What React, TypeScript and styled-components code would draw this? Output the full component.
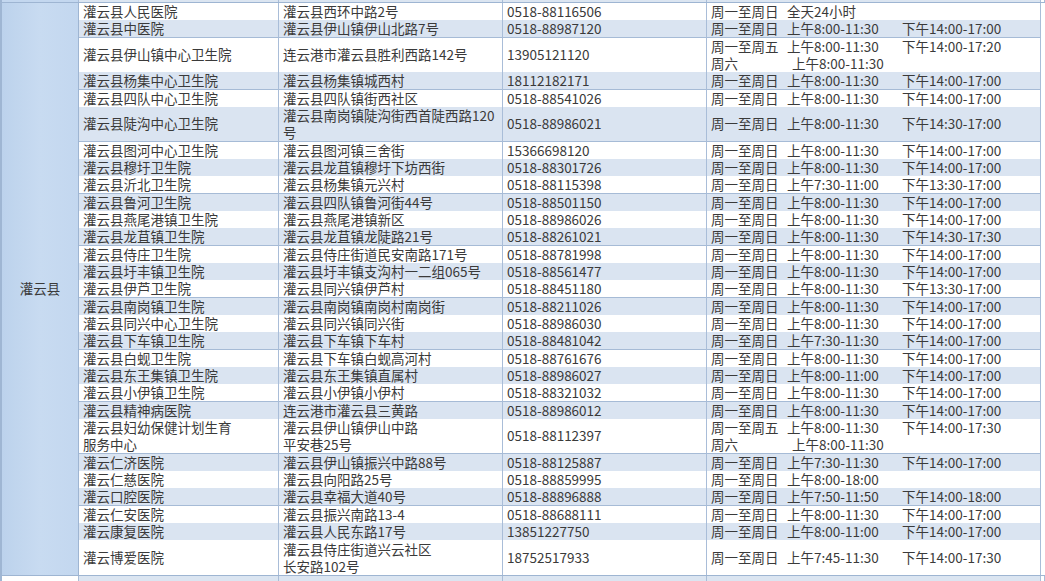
import React from "react";
import styled, { createGlobalStyle } from "styled-components";

const Global = createGlobalStyle`
  html, body { margin: 0; padding: 0; background: #ffffff; }
  body { width: 1045px; height: 581px; overflow: hidden; }
`;

const UNIT = 17.33;
const COLS = "200px 224px 204px 334px";

type Hours =
  | { kind: "allday" }
  | { kind: "day"; am: string; pm?: string }
  | { kind: "weekday"; am: string; pm: string; sat: string };

type Entry = {
  name: string[];
  addr: string[];
  phone: string;
  hours: Hours;
  units?: number;
};

const d = (am: string, pm?: string): Hours => ({ kind: "day", am, pm });

const rows: Entry[] = [
  { name: ["灌云县人民医院"], addr: ["灌云县西环中路2号"], phone: "0518-88116506", hours: { kind: "allday" } },
  { name: ["灌云县中医院"], addr: ["灌云县伊山镇伊山北路7号"], phone: "0518-88987120", hours: d("8:00-11:30", "14:00-17:00") },
  { name: ["灌云县伊山镇中心卫生院"], addr: ["连云港市灌云县胜利西路142号"], phone: "13905121120", hours: { kind: "weekday", am: "8:00-11:30", pm: "14:00-17:20", sat: "8:00-11:30" }, units: 2 },
  { name: ["灌云县杨集中心卫生院"], addr: ["灌云县杨集镇城西村"], phone: "18112182171", hours: d("8:00-11:30", "14:00-17:00") },
  { name: ["灌云县四队中心卫生院"], addr: ["灌云县四队镇街西社区"], phone: "0518-88541026", hours: d("8:00-11:30", "14:00-17:00") },
  { name: ["灌云县陡沟中心卫生院"], addr: ["灌云县南岗镇陡沟街西首陡西路120", "号"], phone: "0518-88986021", hours: d("8:00-11:30", "14:30-17:00"), units: 2 },
  { name: ["灌云县图河中心卫生院"], addr: ["灌云县图河镇三舍街"], phone: "15366698120", hours: d("8:00-11:30", "14:00-17:00") },
  { name: ["灌云县穆圩卫生院"], addr: ["灌云县龙苴镇穆圩下坊西街"], phone: "0518-88301726", hours: d("8:00-11:30", "14:00-17:00") },
  { name: ["灌云县沂北卫生院"], addr: ["灌云县杨集镇元兴村"], phone: "0518-88115398", hours: d("7:30-11:00", "13:30-17:00") },
  { name: ["灌云县鲁河卫生院"], addr: ["灌云县四队镇鲁河街44号"], phone: "0518-88501150", hours: d("8:00-11:30", "14:00-17:00") },
  { name: ["灌云县燕尾港镇卫生院"], addr: ["灌云县燕尾港镇新区"], phone: "0518-88986026", hours: d("8:00-11:30", "14:00-17:00") },
  { name: ["灌云县龙苴镇卫生院"], addr: ["灌云县龙苴镇龙陡路21号"], phone: "0518-88261021", hours: d("8:00-11:30", "14:30-17:30") },
  { name: ["灌云县侍庄卫生院"], addr: ["灌云县侍庄街道民安南路171号"], phone: "0518-88781998", hours: d("8:00-11:30", "14:00-17:00") },
  { name: ["灌云县圩丰镇卫生院"], addr: ["灌云县圩丰镇支沟村一二组065号"], phone: "0518-88561477", hours: d("8:00-11:30", "14:00-17:00") },
  { name: ["灌云县伊芦卫生院"], addr: ["灌云县同兴镇伊芦村"], phone: "0518-88451180", hours: d("8:00-11:30", "13:30-17:00") },
  { name: ["灌云县南岗镇卫生院"], addr: ["灌云县南岗镇南岗村南岗街"], phone: "0518-88211026", hours: d("8:00-11:30", "14:00-17:00") },
  { name: ["灌云县同兴中心卫生院"], addr: ["灌云县同兴镇同兴街"], phone: "0518-88986030", hours: d("8:00-11:30", "14:00-17:00") },
  { name: ["灌云县下车镇卫生院"], addr: ["灌云县下车镇下车村"], phone: "0518-88481042", hours: d("7:30-11:30", "14:00-17:00") },
  { name: ["灌云县白蚬卫生院"], addr: ["灌云县下车镇白蚬高河村"], phone: "0518-88761676", hours: d("8:00-11:30", "14:00-17:00") },
  { name: ["灌云县东王集镇卫生院"], addr: ["灌云县东王集镇直属村"], phone: "0518-88986027", hours: d("8:00-11:00", "14:00-17:00") },
  { name: ["灌云县小伊镇卫生院"], addr: ["灌云县小伊镇小伊村"], phone: "0518-88321032", hours: d("8:00-11:30", "14:00-17:00") },
  { name: ["灌云县精神病医院"], addr: ["连云港市灌云县三黄路"], phone: "0518-88986012", hours: d("8:00-11:30", "14:00-17:00") },
  { name: ["灌云县妇幼保健计划生育", "服务中心"], addr: ["灌云县伊山镇伊山中路", "平安巷25号"], phone: "0518-88112397", hours: { kind: "weekday", am: "8:00-11:30", pm: "14:00-17:30", sat: "8:00-11:30" }, units: 2 },
  { name: ["灌云仁济医院"], addr: ["灌云县伊山镇振兴中路88号"], phone: "0518-88125887", hours: d("7:30-11:30", "14:00-17:00") },
  { name: ["灌云仁慈医院"], addr: ["灌云县向阳路25号"], phone: "0518-88859995", hours: d("8:00-18:00") },
  { name: ["灌云口腔医院"], addr: ["灌云县幸福大道40号"], phone: "0518-88896888", hours: d("7:50-11:50", "14:00-18:00") },
  { name: ["灌云仁安医院"], addr: ["灌云县振兴南路13-4"], phone: "0518-88688111", hours: d("8:00-11:30", "14:00-17:00") },
  { name: ["灌云康复医院"], addr: ["灌云县人民东路17号"], phone: "13851227750", hours: d("8:00-11:00", "14:00-17:00") },
  { name: ["灌云博爱医院"], addr: ["灌云县侍庄街道兴云社区", "长安路102号"], phone: "18752517933", hours: d("7:45-11:30", "14:00-17:30"), units: 2 },
];

const Sheet = styled.div`
  width: 1045px;
  height: 581px;
  display: flex;
  flex-direction: column;
  border-left: 2px solid #9fb6d3;
  box-sizing: border-box;
  font-family: "Noto Sans CJK SC", "Noto Sans", sans-serif;
  font-size: 13.5px;
  color: #3a3a3a;
  background: #ffffff;
`;

const StubRow = styled.div<{ $top?: boolean }>`
  display: grid;
  grid-template-columns: 77px ${COLS} 1fr;
  flex: 0 0 ${(p) => (p.$top ? "3px" : "6px")};
  border-bottom: ${(p) => (p.$top ? "1px solid #9eb5d2" : "none")};
  box-sizing: border-box;
`;

const StubCell = styled.div<{ $region?: boolean; $blue?: boolean }>`
  background: ${(p) => (p.$region ? (p.$blue ? "#c3d7ef" : "#ffffff") : p.$blue ? "#dbe5f1" : "#ffffff")};
  border-right: 1px solid #a9bdd8;
`;

const Body = styled.div`
  display: flex;
  flex: 0 0 auto;
  border-bottom: 1px solid #9eb5d2;
`;

const Region = styled.div`
  width: 77px;
  flex: 0 0 77px;
  display: flex;
  align-items: center;
  justify-content: center;
  background: linear-gradient(90deg, #bcd2ec 0%, #c8dbf1 50%, #c3d7ef 100%);
  border-right: 1px solid #9eb5d2;
  padding-bottom: 2px;
  box-sizing: border-box;
`;

const Rows = styled.div`
  display: flex;
  flex-direction: column;
`;

const Row = styled.div<{ $units: number; $blue: boolean }>`
  display: grid;
  grid-template-columns: ${COLS};
  height: ${(p) => p.$units * UNIT}px;
  background: ${(p) => (p.$blue ? "#dae4f1" : "#ffffff")};
  &:not(:last-child) > div {
    border-bottom: 1px solid #a6bbd6;
  }
`;

const Cell = styled.div`
  display: flex;
  flex-direction: column;
  justify-content: center;
  padding: 0 0 0 4px;
  border-right: 1px solid #a9bdd8;
  box-sizing: border-box;
  white-space: nowrap;
  line-height: 17px;
`;

const Line = styled.div``;

const HoursGrid = styled.div`
  display: grid;
  grid-template-columns: 76px 115px auto;
  line-height: 17px;
`;

const Span = styled.span<{ $shift?: number }>`
  padding-left: ${(p) => p.$shift ?? 0}px;
`;

function HoursView({ h }: { h: Hours }) {
  if (h.kind === "allday") {
    return (
      <HoursGrid>
        <Span>周一至周日</Span>
        <Span>全天24小时</Span>
        <Span />
      </HoursGrid>
    );
  }
  if (h.kind === "day") {
    return (
      <HoursGrid>
        <Span>周一至周日</Span>
        <Span>上午{h.am}</Span>
        <Span>{h.pm ? `下午${h.pm}` : ""}</Span>
      </HoursGrid>
    );
  }
  return (
    <HoursGrid>
      <Span>周一至周五</Span>
      <Span>上午{h.am}</Span>
      <Span>下午{h.pm}</Span>
      <Span>周六</Span>
      <Span $shift={5}>上午{h.sat}</Span>
      <Span />
    </HoursGrid>
  );
}

export default function App() {
  return (
    <>
      <Global />
      <Sheet>
        <StubRow $top>
          <StubCell $region $blue />
          <StubCell $blue />
          <StubCell $blue />
          <StubCell $blue />
          <StubCell $blue />
          <StubCell />
        </StubRow>
        <Body>
          <Region>灌云县</Region>
          <Rows>
            {rows.map((r, i) => (
              <Row key={i} $units={r.units ?? 1} $blue={i % 2 === 1}>
                <Cell>
                  {r.name.map((t, k) => (
                    <Line key={k}>{t}</Line>
                  ))}
                </Cell>
                <Cell>
                  {r.addr.map((t, k) => (
                    <Line key={k}>{t}</Line>
                  ))}
                </Cell>
                <Cell>{r.phone}</Cell>
                <Cell>
                  <HoursView h={r.hours} />
                </Cell>
              </Row>
            ))}
          </Rows>
        </Body>
        <StubRow>
          <StubCell $region />
          <StubCell $blue />
          <StubCell $blue />
          <StubCell $blue />
          <StubCell $blue />
          <StubCell />
        </StubRow>
      </Sheet>
    </>
  );
}
